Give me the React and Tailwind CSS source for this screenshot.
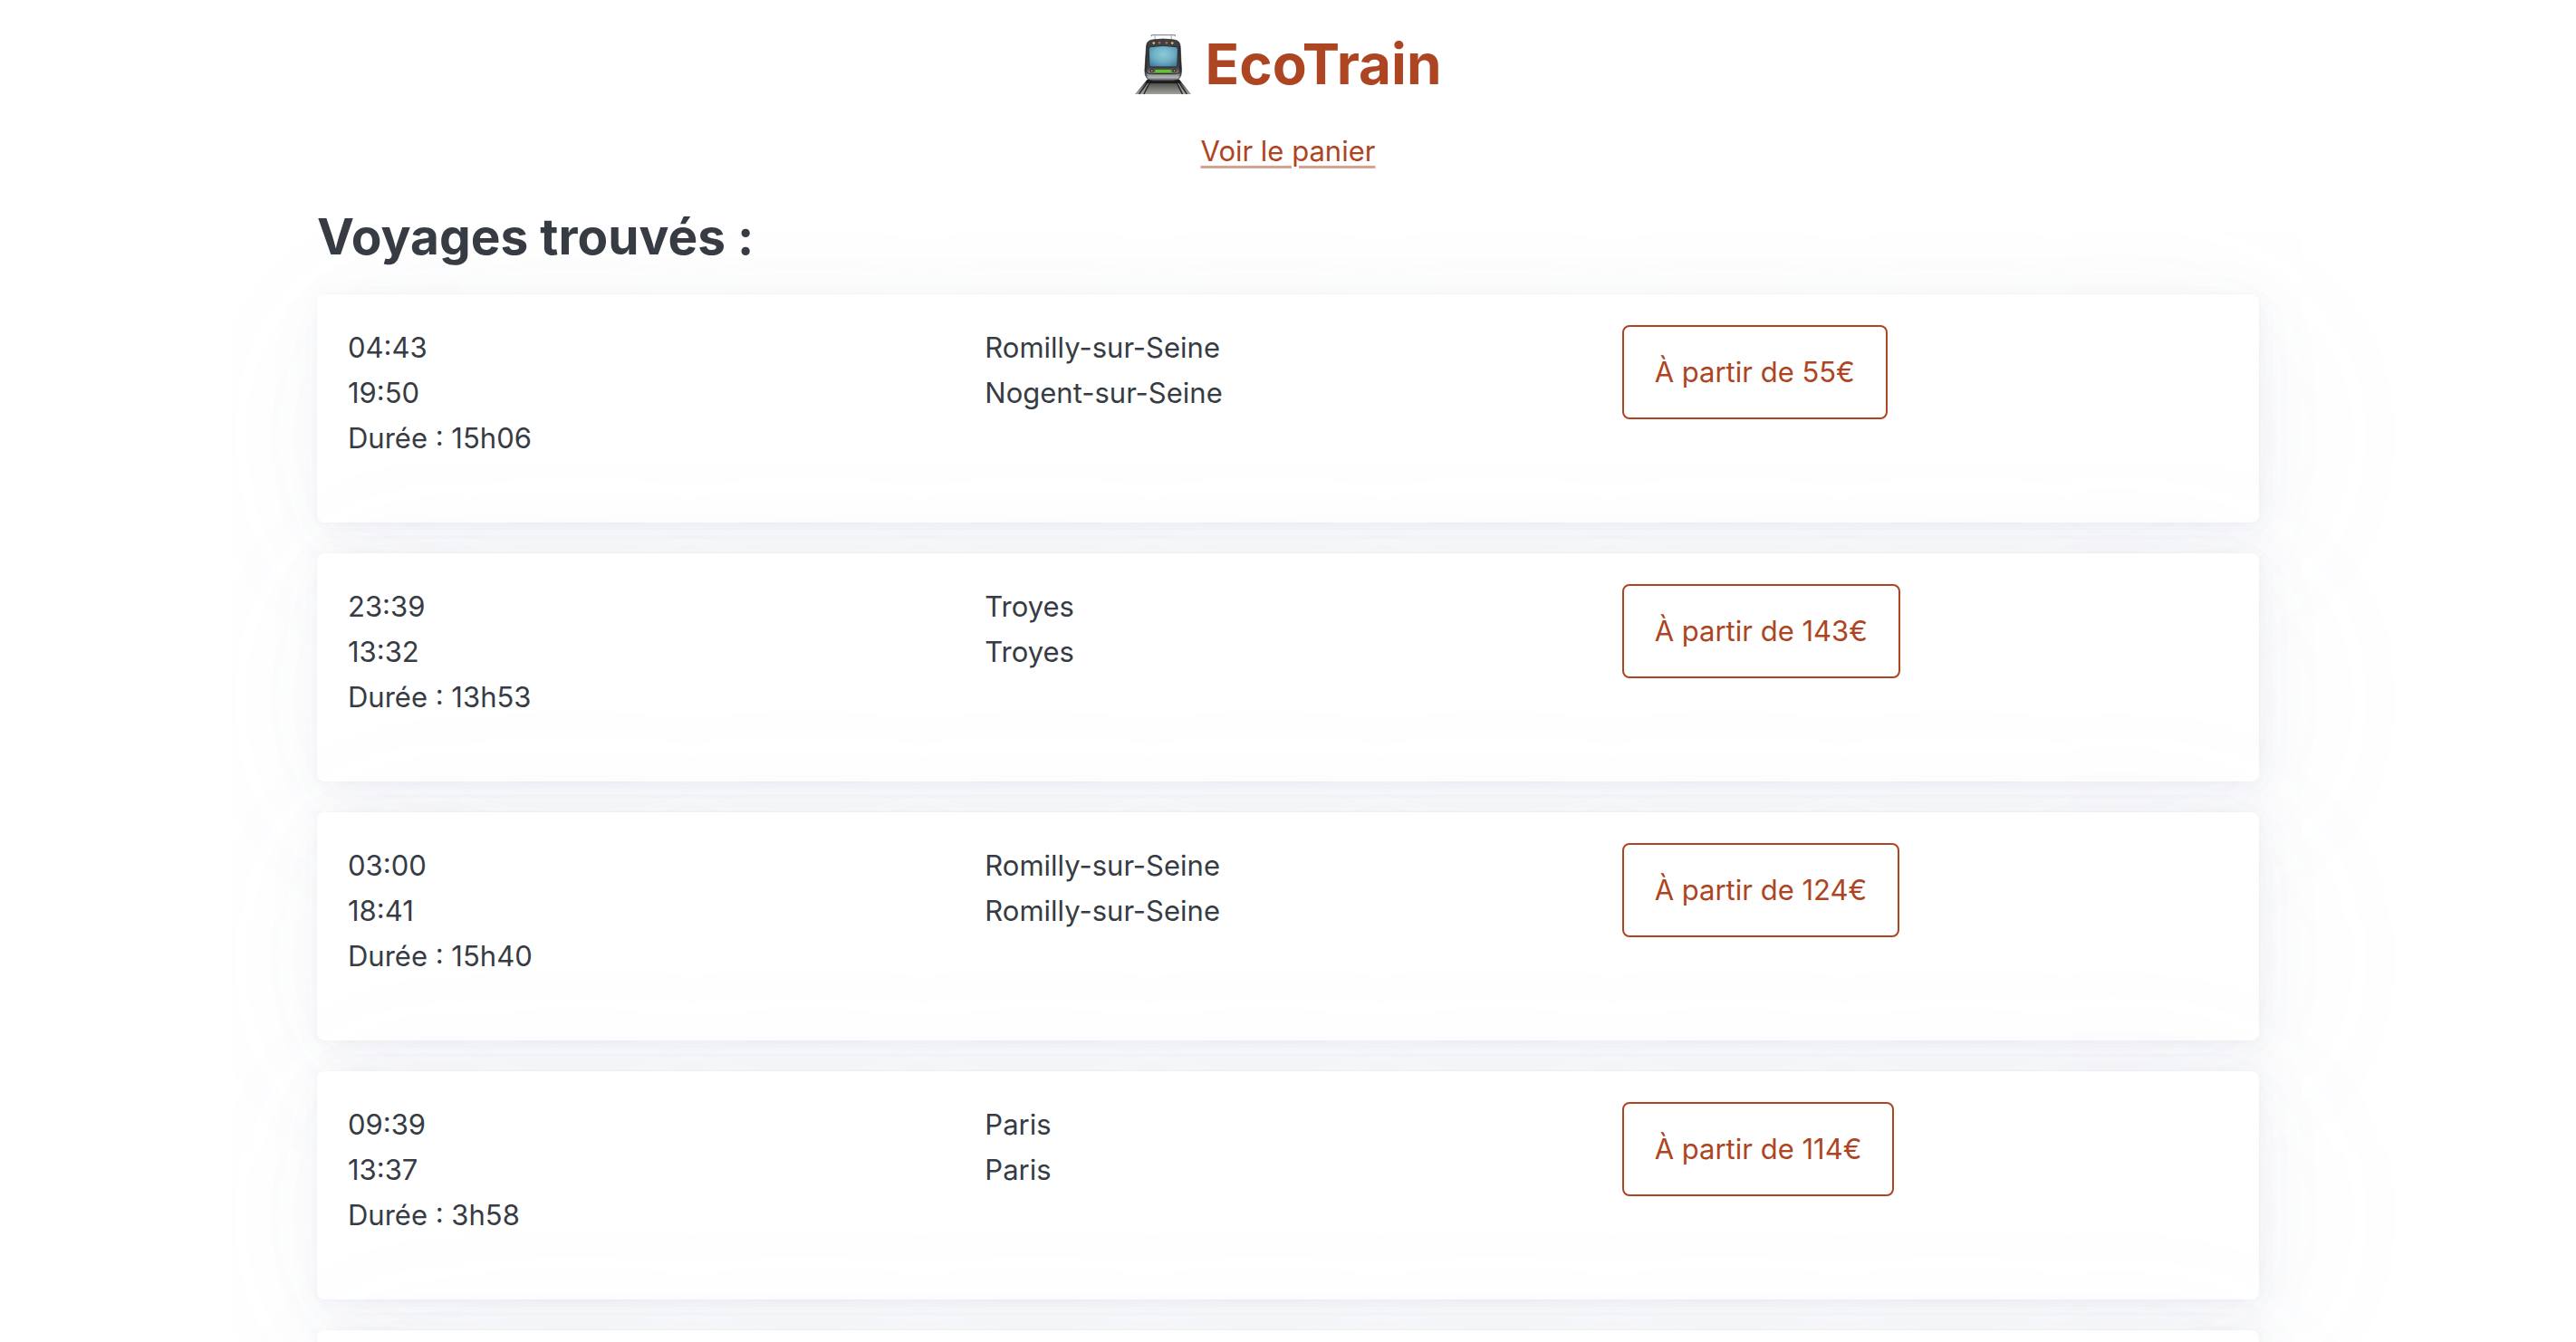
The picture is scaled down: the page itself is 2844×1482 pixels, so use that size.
const trips = [
  { departure: '04:43', arrival: '19:50', duration: '15h06', from: 'Romilly-sur-Seine', to: 'Nogent-sur-Seine', price: 55 },
  { departure: '23:39', arrival: '13:32', duration: '13h53', from: 'Troyes', to: 'Troyes', price: 143 },
  { departure: '03:00', arrival: '18:41', duration: '15h40', from: 'Romilly-sur-Seine', to: 'Romilly-sur-Seine', price: 124 },
  { departure: '09:39', arrival: '13:37', duration: '3h58', from: 'Paris', to: 'Paris', price: 114 },
];

function TrainIcon() {
  return (
    <svg viewBox="24 32 188 204" className="h-[68px] w-[62px]" aria-hidden="true">
      <defs>
        <linearGradient id="track" x1="0" y1="0" x2="0" y2="1">
          <stop offset="0" stopColor="#171817" />
          <stop offset="0.35" stopColor="#5c5e5b" />
          <stop offset="1" stopColor="#a0a19d" />
        </linearGradient>
        <linearGradient id="body" x1="0" y1="0" x2="0" y2="1">
          <stop offset="0" stopColor="#3d3e40" />
          <stop offset="0.7" stopColor="#47484a" />
          <stop offset="0.8" stopColor="#77787a" />
          <stop offset="0.92" stopColor="#b4b5b6" />
          <stop offset="1" stopColor="#4c4d4e" />
        </linearGradient>
        <linearGradient id="side" x1="0" y1="0" x2="1" y2="0">
          <stop offset="0" stopColor="#000" stopOpacity="0.6" />
          <stop offset="0.1" stopColor="#000" stopOpacity="0" />
          <stop offset="0.9" stopColor="#000" stopOpacity="0" />
          <stop offset="1" stopColor="#000" stopOpacity="0.6" />
        </linearGradient>
        <radialGradient id="glass" cx="0.5" cy="0.4" r="0.65">
          <stop offset="0" stopColor="#8acbd6" />
          <stop offset="0.55" stopColor="#6fafc5" />
          <stop offset="1" stopColor="#477f9f" />
        </radialGradient>
      </defs>
      <path d="M64 186H174L212 234H24Z" fill="url(#track)" />
      <path d="M70 190L38 234M76 190L54 234M168 190L198 234M161 190L183 234" stroke="#242524" strokeWidth="4" fill="none" />
      <path d="M73 190L46 234M165 190L191 234" stroke="#b3b3af" strokeWidth="2" fill="none" />
      <path d="M66 184H172L178 198H60Z" fill="#111" opacity="0.75" />
      <path d="M78 40L81 36H157L160 40" stroke="#8e9299" strokeWidth="4" fill="none" />
      <path d="M91 38V53M146 38V53" stroke="#a6a8ac" strokeWidth="3" />
      <path d="M82 52Q119 46 156 52Q175 54 176 74L180 154Q181 189 152 189H86Q56 189 57 154L62 74Q63 54 82 52Z" fill="url(#body)" />
      <path d="M82 52Q119 46 156 52Q175 54 176 74L180 154Q181 189 152 189H86Q56 189 57 154L62 74Q63 54 82 52Z" fill="url(#side)" stroke="#2c2d2e" strokeWidth="2" />
      <path d="M60 150Q60 166 80 166H158Q177 166 178 150" stroke="#262728" strokeWidth="3" fill="none" />
      <path d="M77 75Q119 69 161 75Q168 76 168 83L166 137Q165 143 158 143H80Q73 143 72 137L70 83Q70 76 77 75Z" fill="url(#glass)" stroke="#242b30" strokeWidth="3" />
      <rect x="91" y="150" width="55" height="14" rx="3" fill="#3f5a35" />
      <rect x="92" y="152" width="53" height="11" rx="1" fill="#66c22f" />
      <circle cx="87" cy="63" r="4" fill="#e8bf68" />
      <circle cx="106" cy="62" r="4" fill="#c5605b" />
      <circle cx="130" cy="62" r="4" fill="#c5605b" />
      <circle cx="149" cy="63" r="4" fill="#e8bf68" />
      <circle cx="81" cy="156" r="6" fill="#242526" />
      <circle cx="156" cy="156" r="6" fill="#242526" />
      <circle cx="81" cy="156" r="3" fill="#d9a656" />
      <circle cx="156" cy="156" r="3" fill="#d9a656" />
    </svg>
  );
}

function Card({ children }) {
  return (
    <article className="grid shrink-0 grid-cols-3 gap-[34px] rounded-lg bg-white p-[34px] pb-[68px] shadow-[1px_1px_6px_rgba(129,145,181,0.017),1px_2px_13px_rgba(129,145,181,0.024),2px_4px_25px_rgba(129,145,181,0.03),4px_8px_45px_rgba(129,145,181,0.036),7px_14px_84px_rgba(129,145,181,0.043),17px_34px_201px_rgba(129,145,181,0.06),0_0_0_1px_rgba(129,145,181,0.015)]">
      {children}
    </article>
  );
}

function TripCard({ trip }) {
  return (
    <Card>
      <div>
        <p>{trip.departure}</p>
        <p>{trip.arrival}</p>
        <p>{`Durée : ${trip.duration}`}</p>
      </div>
      <div>
        <p>{trip.from}</p>
        <p>{trip.to}</p>
      </div>
      <div>
        <button type="button" className="block rounded-lg border-2 border-[#ad4523] px-[34px] py-[25px] text-[#ad4523]">
          {`À partir de ${trip.price}€`}
        </button>
      </div>
    </Card>
  );
}

export default function App() {
  return (
    <div className="h-screen overflow-hidden bg-white font-['Inter',sans-serif] text-[31px] leading-[50px] text-[#373c44]">
      <header className="flex flex-col items-center gap-[33px] pt-[33px]">
        <h1 className="flex items-center gap-4 text-[62px] leading-[76px] font-bold text-[#ad4523]">
          <TrainIcon />
          EcoTrain
        </h1>
        <a href="#panier" className="text-[#ad4523] underline decoration-[#ad4523]/50 decoration-3 underline-offset-5">
          Voir le panier
        </a>
      </header>
      <main className="mx-auto max-w-[2144px] pt-[36px]">
        <h2 className="mb-[31px] text-[55px] leading-[66px] font-bold">Voyages trouvés :</h2>
        <div className="flex flex-col gap-[34px]">
          {trips.map((trip) => (
            <TripCard key={trip.departure} trip={trip} />
          ))}
          <Card />
        </div>
      </main>
    </div>
  );
}
